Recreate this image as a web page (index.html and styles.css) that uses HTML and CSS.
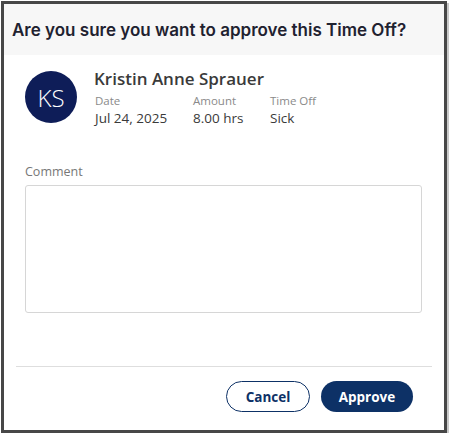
FILE: index.html
```html
<!DOCTYPE html>
<html lang="en">
  <head>
    <meta charset="UTF-8" />
    <meta name="viewport" content="width=device-width, initial-scale=1.0" />
    <title>Approve Time Off</title>
    <link rel="stylesheet" href="styles.css">
  </head>
  <body>
    <div class="dialog">
      <div class="dialog-head">
        <h2 class="dialog-title">Are you sure you want to approve this Time Off?</h2>
      </div>
      <div class="dialog-body">
        <div class="request">
          <div class="avatar">KS</div>
          <div class="request-info">
            <div class="request-name">Kristin Anne Sprauer</div>
            <div class="request-fields">
              <div class="field field-date">
                <span class="field-label">Date</span>
                <span class="field-value">Jul 24, 2025</span>
              </div>
              <div class="field field-amount">
                <span class="field-label">Amount</span>
                <span class="field-value">8.00 hrs</span>
              </div>
              <div class="field">
                <span class="field-label">Time Off</span>
                <span class="field-value">Sick</span>
              </div>
            </div>
          </div>
        </div>
        <label class="comment-label" for="comment">Comment</label>
        <textarea class="comment" id="comment" name="comment"></textarea>
      </div>
      <div class="dialog-foot">
        <button type="button" class="btn btn-cancel">Cancel</button>
        <button type="button" class="btn btn-approve">Approve</button>
      </div>
    </div>
  </body>
</html>
```

FILE: styles.css
```css
body {
  margin: 0;
  background: #ffffff;
  font-family: "Open Sans", Arial, sans-serif;
}
.dialog {
  width: 440px;
  height: 426px;
  margin: 1px 0 0 1px;
  border: 3px solid #474747;
  box-shadow: 2px 2px 0 #c9c9c9;
  background: #ffffff;
  display: flex;
  flex-direction: column;
}
.dialog-head {
  height: 51px;
  background: #f7f7f7;
  padding: 0 8px;
  display: flex;
  align-items: center;
}
.dialog-title {
  margin: 0;
  font-family: Inter, "Noto Sans", sans-serif;
  font-size: 17px;
  font-weight: 600;
  color: #1f2230;
}
.dialog-body {
  padding: 16px 22px 0 21px;
  display: flex;
  flex-direction: column;
  flex: 1;
}
.request {
  display: flex;
  gap: 18px;
}
.avatar {
  width: 52px;
  height: 52px;
  border-radius: 50%;
  background: #0e1d58;
  color: #ffffff;
  font-size: 24px;
  font-weight: 300;
  display: flex;
  align-items: center;
  justify-content: center;
}
.request-name {
  font-size: 17px;
  font-weight: 600;
  color: #3a3a3a;
  line-height: 22px;
  margin-top: -3px;
  margin-left: -1px;
}
.request-fields {
  display: flex;
  margin-top: 3px;
}
.field {
  display: flex;
  flex-direction: column;
}
.field-date {
  width: 98px;
}
.field-amount {
  width: 77px;
}
.field-label {
  font-size: 11.5px;
  color: #8a8a8a;
  line-height: 16px;
}
.field-value {
  font-size: 13.5px;
  color: #3a3a3a;
  line-height: 18px;
}
.comment-label {
  margin-top: 36px;
  font-size: 12.5px;
  color: #777777;
  line-height: 18px;
}
.comment {
  margin-top: 4px;
  height: 128px;
  border: 1px solid #d6d6d6;
  border-radius: 3px;
  resize: none;
  padding: 6px;
  box-sizing: border-box;
}
.dialog-foot {
  margin: 0 12px;
  border-top: 1px solid #dedede;
  padding: 14px 19px 18px 0;
  display: flex;
  justify-content: flex-end;
  gap: 11px;
}
.btn {
  height: 31px;
  border-radius: 16px;
  font-family: "Open Sans", Arial, sans-serif;
  font-size: 13.5px;
  font-weight: 700;
  cursor: pointer;
}
.btn-cancel {
  width: 84px;
  background: #ffffff;
  border: 1px solid #0d3166;
  color: #0d3166;
}
.btn-approve {
  width: 92px;
  background: #0d3166;
  border: none;
  color: #ffffff;
}
```
